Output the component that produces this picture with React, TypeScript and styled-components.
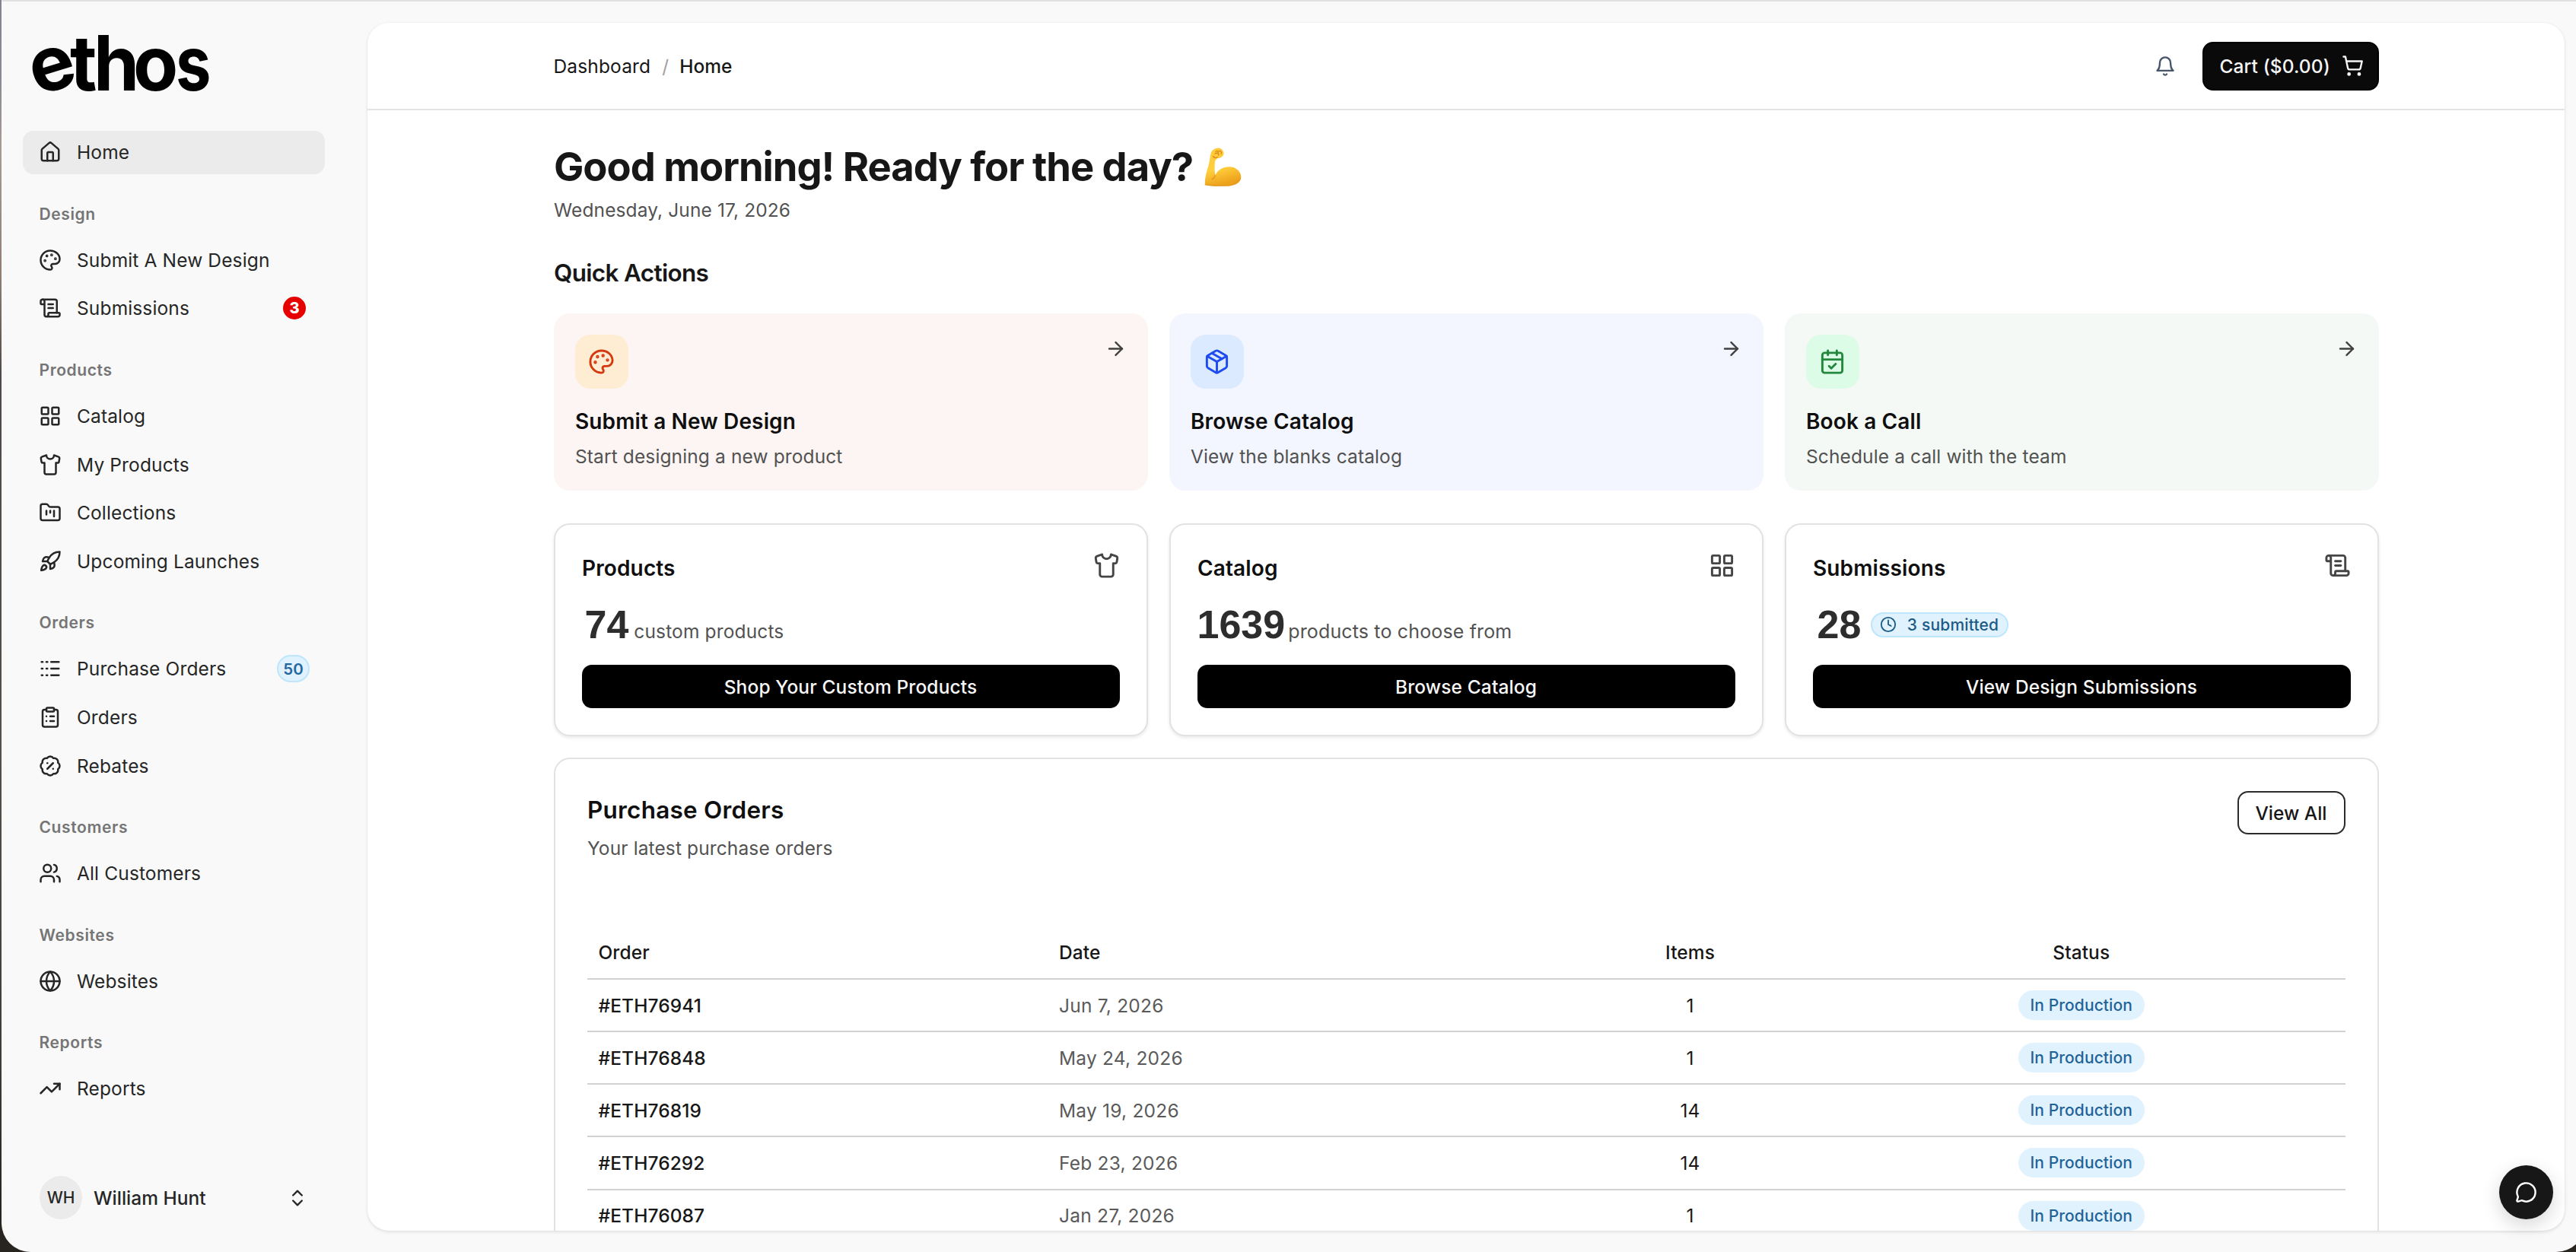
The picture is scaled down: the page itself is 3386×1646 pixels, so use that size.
import React from 'react';
import styled, { createGlobalStyle, css } from 'styled-components';
import {
  ArrowRight,
  BadgePercent,
  CalendarCheck,
  ChevronsUpDown,
  ClipboardList,
  Clock,
  FolderKanban,
  Globe,
  House,
  LayoutGrid,
  Logs,
  MessageCircle,
  Package,
  Palette,
  Rocket,
  ScrollText,
  Shirt,
  ShoppingCart,
  TrendingUp,
  Users,
  type LucideIcon,
} from 'lucide-react';

const GlobalStyle = createGlobalStyle`
  *, *::before, *::after { box-sizing: border-box; }
  html, body { margin: 0; padding: 0; }
  body {
    font-family: Inter, "Liberation Sans", sans-serif;
    font-size: 24.5px;
    color: #171717;
    overflow: hidden;
  }
  h1, h2, h3, p { margin: 0; }
  button { font: inherit; border: 0; cursor: pointer; }
  svg { flex: none; display: block; }
`;

/* ---------- window ---------- */

const Desktop = styled.div`
  width: 100vw;
  height: 100vh;
  overflow: hidden;
  padding-left: 2px;
  background: linear-gradient(180deg, #84838d 0%, #8a8994 6%, #a79a92 12%, #8f7e72 22%, #4f4a47 30%, #56504b 60%, #3f3c38 85%, #28241f 97%);
`;

const Window = styled.div`
  display: flex;
  width: calc(100% + 12px);
  height: 100%;
  padding-right: 27px;
  background: #f9f9f9;
  border-top: 2px solid #e1e1e1;
  border-left: 1px solid #fdfdfd;
  border-radius: 0 0 38px 38px;
`;

/* ---------- sidebar ---------- */

const Sidebar = styled.aside`
  display: flex;
  flex-direction: column;
  width: 480px;
  flex: none;
  padding: 36px 56px 43px 27px;
`;

const Logo = styled.svg`
  width: 240px;
  height: 84px;
  margin: 0 0 50px 8px;
  overflow: visible;
  font-family: Inter, sans-serif;
  font-weight: 700;
  font-size: 100px;
  fill: #000;
`;

const NavList = styled.nav`
  display: flex;
  flex-direction: column;
  gap: 7px;
`;

const NavItem = styled.a<{ $active?: boolean }>`
  display: flex;
  align-items: center;
  gap: 20.5px;
  height: 56.6px;
  padding: 0 20px 0 20.5px;
  border-radius: 14px;
  color: #262626;
  letter-spacing: 0.14px;
  background: ${(p) => (p.$active ? '#ebebeb' : 'transparent')};
`;

const NavText = styled.span`
  flex: 1;
  white-space: nowrap;
`;

const NavHeading = styled.div`
  height: 71px;
  padding: 32px 21.5px 0;
  font-size: 21px;
  line-height: 28px;
  font-weight: 600;
  letter-spacing: 0.62px;
  color: #757575;
`;

const AlertCount = styled.span`
  display: grid;
  place-items: center;
  width: 30px;
  height: 30px;
  margin-right: 5px;
  border-radius: 50%;
  background: #e60000;
  color: #fff;
  font-size: 20px;
  font-weight: 800;
  letter-spacing: 0;
`;

const InfoCount = styled.span`
  display: grid;
  place-items: center;
  width: 43px;
  height: 36px;
  border: 2px solid #bde6fd;
  border-radius: 18px;
  background: #e0f2fe;
  color: #24679f;
  font-size: 20.5px;
  font-weight: 600;
  letter-spacing: 0;
`;

const Account = styled.div`
  display: flex;
  align-items: center;
  gap: 15px;
  margin-top: auto;
  padding: 0 22px 0 22px;
  font-weight: 500;
  color: #262626;
`;

const Avatar = styled.span`
  display: grid;
  place-items: center;
  width: 56px;
  height: 57px;
  border-radius: 50%;
  background: #ebebeb;
  font-size: 21px;
`;

const AccountName = styled.span`
  flex: 1;
`;

/* ---------- main panel ---------- */

const Panel = styled.main`
  display: flex;
  flex-direction: column;
  flex: 1;
  height: 1588px;
  margin-top: 28px;
  overflow: hidden;
  border-radius: 28px;
  background: #fff;
  box-shadow: 0 2px 4px rgba(0, 0, 0, 0.09), 0 0 3px rgba(0, 0, 0, 0.05);
`;

const HeaderBar = styled.header`
  display: flex;
  justify-content: center;
  height: 115px;
  flex: none;
  border-bottom: 2px solid #e3e3e3;
`;

const HeaderInner = styled.div`
  display: flex;
  align-items: center;
  width: 2399px;
`;

const Crumbs = styled.div`
  display: flex;
  flex: 1;
  letter-spacing: 0.15px;
`;

const CrumbSlash = styled.span`
  padding: 0 14px 0 15px;
  color: #a0a0a0;
`;

const CrumbCurrent = styled.span`
  font-weight: 500;
  letter-spacing: 0;
`;

const BellIcon = styled.svg`
  width: 28px;
  height: 28px;
  margin-right: 35px;
  fill: none;
  stroke: #475569;
  stroke-width: 2;
  stroke-linecap: round;
  stroke-linejoin: round;
`;

const CartButton = styled.button`
  display: flex;
  align-items: center;
  justify-content: space-between;
  width: 232px;
  height: 64px;
  padding: 0 18px 0 21px;
  border: 2px solid #000;
  border-radius: 14px;
  background: #0a0a0a;
  color: #f5f5f5;
  font-weight: 500;
  letter-spacing: 0.1px;
`;

const Content = styled.div`
  width: 2399px;
  flex: none;
  align-self: center;
  padding-top: 43px;
`;

const Greeting = styled.h1`
  display: flex;
  align-items: center;
  gap: 15px;
  padding-left: 0.5px;
  font-size: 52.5px;
  line-height: 63px;
  font-weight: 700;
  letter-spacing: -1.03px;
`;

const ArmIcon = styled.svg`
  width: 50px;
  height: 53px;
`;

const Today = styled.p`
  margin-top: 8px;
  padding-left: 0.5px;
  line-height: 35px;
  color: #525252;
  letter-spacing: 0.12px;
`;

const SectionTitle = styled.h2`
  margin-top: 43px;
  padding-left: 0.5px;
  font-size: 31.5px;
  line-height: 44px;
  font-weight: 600;
  letter-spacing: -0.68px;
`;

const ThreeUp = styled.div<{ $top: number }>`
  display: grid;
  grid-template-columns: repeat(3, 1fr);
  gap: 28px;
  margin-top: ${(p) => p.$top}px;
`;

/* ---------- quick actions ---------- */

const tones = {
  orange: { card: '#fdf5f3', tile: '#feecd3', ink: '#d4380d' },
  blue: { card: '#f3f6fe', tile: '#dbeafe', ink: '#1d4bf0' },
  green: { card: '#f4f9f5', tile: '#dcfce7', ink: '#23883c' },
};
type Tone = keyof typeof tones;

const ActionCard = styled.a<{ $tone: Tone }>`
  display: block;
  height: 233px;
  padding: 28px;
  border-radius: 21px;
  background: ${(p) => tones[p.$tone].card};
`;

const ActionTop = styled.div`
  display: flex;
  justify-content: space-between;
  height: 70px;
  color: #404040;

  & > svg { margin-top: 4px; }
`;

const IconTile = styled.span<{ $tone: Tone }>`
  display: grid;
  place-items: center;
  width: 70px;
  height: 71px;
  border-radius: 20px;
  background: ${(p) => tones[p.$tone].tile};
  color: ${(p) => tones[p.$tone].ink};
`;

const CardTitle = styled.h3<{ $top?: number }>`
  margin-top: ${(p) => p.$top ?? 0}px;
  padding-left: 0.5px;
  font-size: 28px;
  line-height: 43px;
  font-weight: 600;
  letter-spacing: 0.13px;
  color: #0f0f0f;
`;

const ActionNote = styled.p`
  margin-top: 7px;
  padding-left: 0.5px;
  line-height: 35px;
  color: #525252;
  letter-spacing: 0.12px;
`;

/* ---------- stat cards ---------- */

const surface = css`
  border: 2px solid #e2e2e2;
  border-radius: 21px;
  background: #fff;
`;

const StatCard = styled.section`
  ${surface}
  height: 280px;
  padding: 35px;
  box-shadow: 0 2px 4px rgba(0, 0, 0, 0.09);
`;

const StatTop = styled.div`
  display: flex;
  justify-content: space-between;
  height: 44px;
  padding-top: 1px;
  color: #454545;
`;

const StatFigure = styled.div<{ $centered?: boolean }>`
  display: flex;
  align-items: ${(p) => (p.$centered ? 'center' : 'baseline')};
  height: 52px;
  margin: 26px 0 27px;
  color: #525252;
  letter-spacing: 0.14px;
`;

const StatNumber = styled.span<{ $indent: number; $gap: number }>`
  margin: 0 ${(p) => p.$gap}px 0 ${(p) => p.$indent}px;
  font-family: "Liberation Sans", Arial, sans-serif;
  font-size: 52px;
  line-height: 52px;
  font-weight: 700;
  letter-spacing: 0;
  color: #2d2d2d;
`;

const StatUnit = styled.span<{ $wide?: boolean }>`
  font-size: ${(p) => (p.$wide ? 25 : 24.5)}px;
  letter-spacing: ${(p) => (p.$wide ? 0.15 : 0.14)}px;
`;

const SubmittedBadge = styled.span`
  display: flex;
  align-items: center;
  gap: 13.5px;
  height: 33px;
  padding: 0 11px 0 10px;
  border: 2px solid #bde6fd;
  border-radius: 17px;
  background: #e0f2fe;
  color: #1c5b86;
  font-size: 21px;
  font-weight: 500;
  letter-spacing: 0.18px;
  white-space: nowrap;
`;

const WideButton = styled.button`
  display: grid;
  place-items: center;
  width: 100%;
  height: 57px;
  border-radius: 13px;
  background: #000;
  color: #f7f7f7;
  font-weight: 500;
  letter-spacing: 0.13px;
`;

/* ---------- purchase orders ---------- */

const OrdersCard = styled.section`
  ${surface}
  height: 760px;
  margin-top: 28px;
  padding: 42px;
`;

const OrdersTop = styled.div`
  display: flex;
  justify-content: space-between;
  align-items: flex-start;
  height: 178px;
`;

const OrdersTitle = styled.h2`
  padding-left: 0.5px;
  font-size: 31.5px;
  line-height: 49px;
  font-weight: 600;
  letter-spacing: 0.23px;
  color: #0f0f0f;
`;

const OrdersNote = styled.p`
  margin-top: 9px;
  padding-left: 0.5px;
  line-height: 35px;
  color: #525252;
  letter-spacing: 0.12px;
`;

const ViewAllButton = styled.button`
  width: 142px;
  height: 57px;
  padding: 0;
  border: 2px solid #2b2b2b;
  border-radius: 14px;
  background: #fff;
  color: #171717;
  font-weight: 500;
`;

const Row = styled.div<{ $head?: boolean }>`
  display: grid;
  grid-template-columns: 605.5px 677px 334px 1fr;
  align-items: center;
  height: ${(p) => (p.$head ? 70 : 69.15)}px;
  border-bottom: 2px solid #d2d2d2;
  font-weight: ${(p) => (p.$head ? 500 : 400)};
`;

const Cell = styled.div<{ $center?: boolean; $strong?: boolean; $muted?: boolean }>`
  display: flex;
  justify-content: ${(p) => (p.$center ? 'center' : 'flex-start')};
  padding: 0 14px 0 15px;
  letter-spacing: ${(p) => (p.$muted ? 0.22 : 0.08)}px;
  ${(p) => p.$strong && 'font-weight: 500;'}
  ${(p) => p.$muted && 'color: #5a5a5a;'}
`;

const StatusPill = styled.span`
  display: grid;
  place-items: center;
  width: 166px;
  height: 39px;
  border-radius: 20px;
  background: #e0f2fe;
  color: #1f6399;
  font-size: 21px;
  font-weight: 500;
`;

const ChatButton = styled.button`
  position: absolute;
  right: 30px;
  bottom: 43px;
  display: grid;
  place-items: center;
  width: 71px;
  height: 71px;
  border-radius: 50%;
  background: #171717;
  color: #fff;
  box-shadow: 0 8px 24px rgba(0, 0, 0, 0.16);
`;

/* ---------- data ---------- */

type Entry = { label: string; icon: LucideIcon; active?: boolean; alert?: number; info?: number };

const groups: { heading?: string; entries: Entry[] }[] = [
  { entries: [{ label: 'Home', icon: House, active: true }] },
  {
    heading: 'Design',
    entries: [
      { label: 'Submit A New Design', icon: Palette },
      { label: 'Submissions', icon: ScrollText, alert: 3 },
    ],
  },
  {
    heading: 'Products',
    entries: [
      { label: 'Catalog', icon: LayoutGrid },
      { label: 'My Products', icon: Shirt },
      { label: 'Collections', icon: FolderKanban },
      { label: 'Upcoming Launches', icon: Rocket },
    ],
  },
  {
    heading: 'Orders',
    entries: [
      { label: 'Purchase Orders', icon: Logs, info: 50 },
      { label: 'Orders', icon: ClipboardList },
      { label: 'Rebates', icon: BadgePercent },
    ],
  },
  { heading: 'Customers', entries: [{ label: 'All Customers', icon: Users }] },
  { heading: 'Websites', entries: [{ label: 'Websites', icon: Globe }] },
  { heading: 'Reports', entries: [{ label: 'Reports', icon: TrendingUp }] },
];

const actions: { title: string; note: string; tone: Tone; icon: LucideIcon }[] = [
  { title: 'Submit a New Design', note: 'Start designing a new product', tone: 'orange', icon: Palette },
  { title: 'Browse Catalog', note: 'View the blanks catalog', tone: 'blue', icon: Package },
  { title: 'Book a Call', note: 'Schedule a call with the team', tone: 'green', icon: CalendarCheck },
];

const orders = [
  { id: '#ETH76941', date: 'Jun 7, 2026', items: 1 },
  { id: '#ETH76848', date: 'May 24, 2026', items: 1 },
  { id: '#ETH76819', date: 'May 19, 2026', items: 14 },
  { id: '#ETH76292', date: 'Feb 23, 2026', items: 14 },
  { id: '#ETH76087', date: 'Jan 27, 2026', items: 1 },
];

/* ---------- drawings ---------- */

const EthosLogo = () => (
  <Logo viewBox="0 0 240 84" role="img" aria-label="ethos">
    <text transform="rotate(-17 31 54) translate(1.5 80.5)">e</text>
    <text transform="translate(0 80.5) scale(0.965 1)" x="56 88 142">tho</text>
    <text transform="translate(193 80.5) scale(0.83 1)">s</text>
  </Logo>
);

const FlexedArm = () => (
  <ArmIcon viewBox="40 29 150 158" role="img" aria-label="flexed biceps">
    <defs>
      <linearGradient id="arm" x1="0" y1="0" x2="0.25" y2="1">
        <stop offset="0" stopColor="#ffc83a" />
        <stop offset="0.6" stopColor="#ffcf3d" />
        <stop offset="1" stopColor="#eda21c" />
      </linearGradient>
    </defs>
    <path
      d="M66 53 C68 43 84 33 95 33 C106 33 116 43 117 54 C116 65 108 70 99 73 C90 74 84 78 82 88 C80 106 80 124 83 141 C92 120 112 107 138 107 C166 107 185 126 185 149 C184 170 160 184 124 184 C94 184 66 184 42 179 C42 152 48 126 56 104 C61 88 62 68 66 53 Z"
      fill="url(#arm)"
    />
    <path d="M83 141 C81 149 76 154 70 156" fill="none" stroke="#e39a1b" strokeWidth="4" strokeLinecap="round" />
    <path
      d="M75 66 C80 73 86 73 92 69 M85 48 C88 42 95 44 95 52 M98 46 C104 43 109 48 107 56 M82 56 C90 50 98 55 96 62"
      fill="none"
      stroke="#d98a17"
      strokeWidth="4"
      strokeLinecap="round"
    />
    <path d="M44 177 C70 182 100 182 126 181 C150 180 172 170 181 156" fill="none" stroke="#e0921a" strokeWidth="4" opacity="0.6" />
  </ArmIcon>
);

export default function App() {
  return (
    <Desktop>
      <GlobalStyle />
      <Window>
        <Sidebar>
          <EthosLogo />
          <NavList>
            {groups.map((group) => (
              <React.Fragment key={group.heading ?? 'top'}>
                {group.heading && <NavHeading>{group.heading}</NavHeading>}
                {group.entries.map(({ label, icon: Icon, active, alert, info }) => (
                  <NavItem key={label} $active={active}>
                    <Icon size={30} />
                    <NavText>{label}</NavText>
                    {alert && <AlertCount>{alert}</AlertCount>}
                    {info && <InfoCount>{info}</InfoCount>}
                  </NavItem>
                ))}
              </React.Fragment>
            ))}
          </NavList>
          <Account>
            <Avatar>WH</Avatar>
            <AccountName>William Hunt</AccountName>
            <ChevronsUpDown size={28} />
          </Account>
        </Sidebar>

        <Panel>
          <HeaderBar>
            <HeaderInner>
              <Crumbs>
                <span>Dashboard</span>
                <CrumbSlash>/</CrumbSlash>
                <CrumbCurrent>Home</CrumbCurrent>
              </Crumbs>
              <BellIcon viewBox="0 0 24 24">
                <path d="M6 8a6 6 0 0 1 12 0c0 7 3 9 3 9H3s3-2 3-9" />
                <path d="M10.3 21a1.94 1.94 0 0 0 3.4 0" />
              </BellIcon>
              <CartButton>
                Cart ($0.00)
                <ShoppingCart size={29} />
              </CartButton>
            </HeaderInner>
          </HeaderBar>

          <Content>
            <Greeting>
              Good morning! Ready for the day?
              <FlexedArm />
            </Greeting>
            <Today>Wednesday, June 17, 2026</Today>

            <SectionTitle>Quick Actions</SectionTitle>
            <ThreeUp $top={31}>
              {actions.map(({ title, note, tone, icon: Icon }) => (
                <ActionCard key={title} $tone={tone}>
                  <ActionTop>
                    <IconTile $tone={tone}>
                      <Icon size={35} />
                    </IconTile>
                    <ArrowRight size={29} />
                  </ActionTop>
                  <CardTitle $top={23}>{title}</CardTitle>
                  <ActionNote>{note}</ActionNote>
                </ActionCard>
              ))}
            </ThreeUp>

            <ThreeUp $top={43}>
              <StatCard>
                <StatTop>
                  <CardTitle>Products</CardTitle>
                  <Shirt size={35} />
                </StatTop>
                <StatFigure>
                  <StatNumber $indent={4} $gap={7}>74</StatNumber>
                  <StatUnit>custom products</StatUnit>
                </StatFigure>
                <WideButton>Shop Your Custom Products</WideButton>
              </StatCard>
              <StatCard>
                <StatTop>
                  <CardTitle>Catalog</CardTitle>
                  <LayoutGrid size={35} />
                </StatTop>
                <StatFigure>
                  <StatNumber $indent={0} $gap={4}>1639</StatNumber>
                  <StatUnit $wide>products to choose from</StatUnit>
                </StatFigure>
                <WideButton>Browse Catalog</WideButton>
              </StatCard>
              <StatCard>
                <StatTop>
                  <CardTitle>Submissions</CardTitle>
                  <ScrollText size={35} />
                </StatTop>
                <StatFigure $centered>
                  <StatNumber $indent={6} $gap={13}>28</StatNumber>
                  <SubmittedBadge>
                    <Clock size={22} />
                    3 submitted
                  </SubmittedBadge>
                </StatFigure>
                <WideButton>View Design Submissions</WideButton>
              </StatCard>
            </ThreeUp>

            <OrdersCard>
              <OrdersTop>
                <div>
                  <OrdersTitle>Purchase Orders</OrdersTitle>
                  <OrdersNote>Your latest purchase orders</OrdersNote>
                </div>
                <ViewAllButton>View All</ViewAllButton>
              </OrdersTop>
              <Row $head>
                <Cell>Order</Cell>
                <Cell>Date</Cell>
                <Cell $center>Items</Cell>
                <Cell $center>Status</Cell>
              </Row>
              {orders.map((order) => (
                <Row key={order.id}>
                  <Cell $strong>{order.id}</Cell>
                  <Cell $muted>{order.date}</Cell>
                  <Cell $center>{order.items}</Cell>
                  <Cell $center>
                    <StatusPill>In Production</StatusPill>
                  </Cell>
                </Row>
              ))}
            </OrdersCard>
          </Content>
        </Panel>
      </Window>
      <ChatButton aria-label="Open chat">
        <MessageCircle size={29} />
      </ChatButton>
    </Desktop>
  );
}
